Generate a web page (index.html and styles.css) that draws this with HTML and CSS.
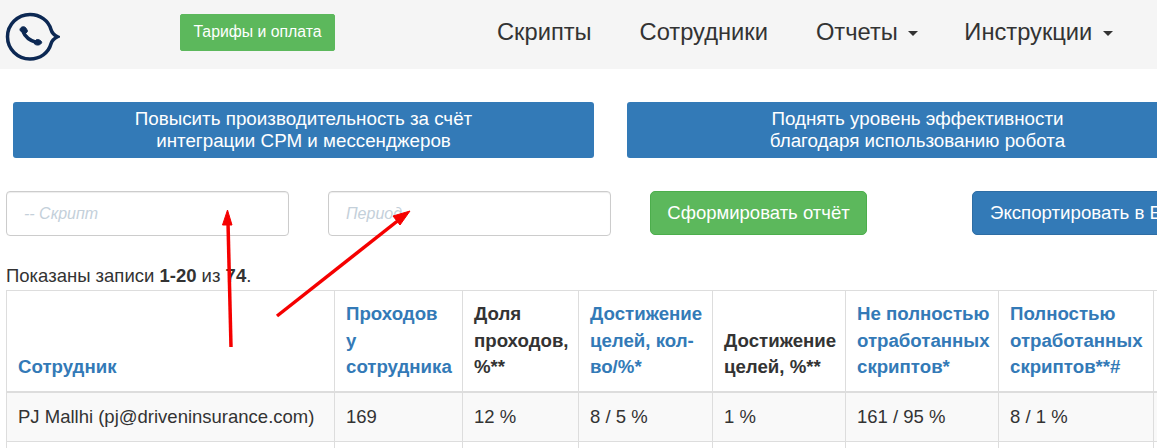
FILE: index.html
```html
<!DOCTYPE html>
<html lang="en">
<head>
  <meta charset="UTF-8" />
  <title>Отчеты</title>
  <link rel="stylesheet" href="styles.css">
</head>
<body>
  <nav class="navbar">
    <a class="logo" href="#">
      <svg width="60" height="60" viewBox="0 0 60 60" fill="none" stroke="#0c2853">
        <path d="M30 9.500c10 0 18.500 6 21 15 .8 3 3 5.500 6.500 7.300-3.500 1.800-5.700 4-6.500 7C48.500 48 40 54 30 54 17.500 54 7.500 44 7.500 31.800S17.500 9.500 30 9.500z" stroke-width="3.500"/>
        <path d="M23 26.500c2 5 6.500 9 13.500 11" stroke-width="3.500"/>
        <path d="M20 25.500c-.5-3 3.200-5 5.500-3l1.800 2.800c.6 1.300-.5 2.700-3 3.200z M34.500 39c2.500 2 6.500 1 7.200-1.500.3-1.300-2.200-2.800-4-3-1.800-.2-3.500 1.800-3.200 4.500z" fill="#0c2853" stroke-width="1"/>
      </svg>
    </a>
    <a class="btn btn-green btn-tariff" href="#">Тарифы и оплата</a>
    <ul class="nav-links">
      <li><a href="#">Скрипты</a></li>
      <li><a href="#">Сотрудники</a></li>
      <li><a href="#">Отчеты <span class="caret"></span></a></li>
      <li><a href="#">Инструкции <span class="caret"></span></a></li>
    </ul>
  </nav>

  <div class="banners">
    <a class="banner" href="#">Повысить производительность за счёт<br>интеграции СРМ и мессенджеров</a>
    <a class="banner" href="#">Поднять уровень эффективности<br>благодаря использованию робота</a>
  </div>

  <form class="filters">
    <input class="field" type="text" placeholder="-- Скрипт">
    <input class="field" type="text" placeholder="Период">
    <a class="btn btn-green btn-report" href="#">Сформировать отчёт</a>
    <a class="btn btn-blue btn-export" href="#">Экспортировать в Excel</a>
  </form>

  <div class="summary">Показаны записи <b>1-20</b> из <b>74</b>.</div>

  <table class="report">
    <colgroup>
      <col class="c1"><col class="c2"><col class="c3"><col class="c4"><col class="c5"><col class="c6"><col class="c7"><col class="c8">
    </colgroup>
    <thead>
      <tr>
        <th><a href="#">Сотрудник</a></th>
        <th><a href="#">Проходов у сотрудника</a></th>
        <th>Доля проходов, %**</th>
        <th><a href="#">Достижение целей, кол-во/%*</a></th>
        <th>Достижение целей, %**</th>
        <th><a href="#"><span class="nowrap">Не полностью</span> отработанных скриптов*</a></th>
        <th><a href="#">Полностью отработанных скриптов**#</a></th>
        <th></th>
      </tr>
    </thead>
    <tbody>
      <tr>
        <td>PJ Mallhi (pj@driveninsurance.com)</td>
        <td>169</td>
        <td>12 %</td>
        <td>8 / 5 %</td>
        <td>1 %</td>
        <td>161 / 95 %</td>
        <td>8 / 1 %</td>
        <td></td>
      </tr>
      <tr class="blank">
        <td></td><td></td><td></td><td></td><td></td><td></td><td></td><td></td>
      </tr>
    </tbody>
  </table>

  <!-- red arrows drawn over the screenshot -->
  <svg class="arrows" width="1157" height="448" viewBox="0 0 1157 448">
    <g stroke="#f50000" stroke-width="3.500" fill="#f50000">
      <path d="M231 347 228 222"/>
      <path d="M227.500 210l-5 15h9.500z" stroke-width="1"/>
      <path d="M277 316 400 219"/>
      <path d="M410 211l-17 5 7 9z" stroke-width="1"/>
    </g>
  </svg>
</body>
</html>
```

FILE: styles.css
```css
html, body {
  height: 448px;
  overflow: hidden;
}

body {
  margin: 0;
  position: relative;
  font-family: "Liberation Sans", Arial, sans-serif;
  font-size: 14pt;
  color: #333;
  background: #fff;
}

a {
  text-decoration: none;
  color: #337ab7;
}

.navbar {
  display: flex;
  align-items: center;
  height: 69px;
  background: #f5f5f5;
}

.logo {
  display: block;
  width: 60px;
  height: 60px;
  flex: none;
}

.btn {
  display: block;
  flex: none;
  text-align: center;
  color: #fff;
  border-radius: 4px;
  box-sizing: border-box;
}

.btn-green {
  background: #5cb85c;
  border: 1px solid #4cae4c;
}

.btn-blue {
  background: #337ab7;
  border: 1px solid #2e6da4;
}

.btn-tariff {
  width: 155px;
  height: 37px;
  margin-left: 120px;
  margin-top: -4px;
  font-size: 15.800px;
  line-height: 33px;
  border-radius: 2px;
  border-color: #5cb85c;
}

.nav-links {
  display: flex;
  gap: 48px;
  list-style: none;
  margin: -4px 0 0 162px;
  padding: 0;
  font-size: 23.700px;
  white-space: nowrap;
}

.nav-links a {
  color: #333;
}

.caret {
  display: inline-block;
  width: 0;
  height: 0;
  margin-left: 4px;
  margin-right: -2px;
  vertical-align: middle;
  border-top: 5px solid #333;
  border-left: 5px solid transparent;
  border-right: 5px solid transparent;
}

.banners {
  display: flex;
  gap: 33px;
  margin: 33px 0 0 13px;
  width: 1300px;
}

.banner {
  flex: none;
  width: 581px;
  height: 56px;
  box-sizing: border-box;
  padding-top: 6px;
  background: #337ab7;
  border-radius: 3px;
  color: #fff;
  font-size: 18.800px;
  text-align: center;
  line-height: 22px;
}

.filters {
  display: flex;
  margin: 33px 0 0 6px;
  width: 1300px;
}

.field {
  flex: none;
  width: 283px;
  height: 45px;
  margin-right: 39px;
  box-sizing: border-box;
  padding: 0 17px;
  font-family: inherit;
  font-size: 16px;
  font-style: italic;
  border: 1px solid #ccc;
  border-radius: 4px;
  box-shadow: inset 0 1px 1px rgba(0, 0, 0, .075);
}

.field::placeholder {
  color: #c4d0da;
  opacity: 1;
}

.btn-report {
  width: 217px;
  height: 44px;
  line-height: 42px;
  font-size: 18.500px;
  border-radius: 5px;
}

.btn-export {
  width: 260px;
  height: 44px;
  margin-left: 105px;
  padding-left: 17px;
  line-height: 42px;
  text-align: left;
  white-space: nowrap;
  border-radius: 5px;
}

.summary {
  margin: 29px 0 0 6px;
  height: 25px;
  font-size: 18.500px;
  line-height: 22px;
}

.report {
  margin-left: 6px;
  width: 1250px;
  table-layout: fixed;
  border-collapse: collapse;
  line-height: 26.670px;
}

.c1 { width: 328px; }
.c2 { width: 128px; }
.c3 { width: 116px; }
.c4 { width: 134px; }
.c5 { width: 133px; }
.c6 { width: 153px; }
.c7 { width: 155px; }

.report th,
.report td {
  border: 1px solid #ddd;
  padding: 11px 11px 10px;
  text-align: left;
}

.report th {
  padding-top: 10px;
  padding-bottom: 10px;
  vertical-align: bottom;
  border-bottom-width: 2px;
  color: #333;
}

.report td {
  font-size: 18.500px;
}

.nowrap {
  white-space: nowrap;
}

.report tbody tr:first-child {
  background: #f9f9f9;
}

.blank td {
  height: 30px;
}

.arrows {
  position: absolute;
  left: 0;
  top: 0;
}
```
